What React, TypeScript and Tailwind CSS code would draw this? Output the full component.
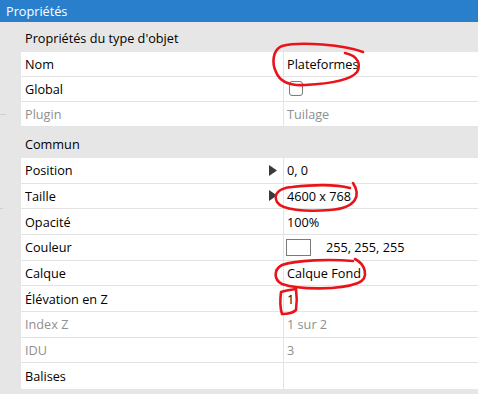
import React from "react";

type Row = {
  label: string;
  value?: React.ReactNode;
  disabled?: boolean;
  arrow?: boolean;
};

const group1: Row[] = [
  { label: "Nom", value: "Plateformes" },
  {
    label: "Global",
    value: <span className="block w-[14px] h-[15px] rounded-[3px] border border-[#7a7a7a] bg-white ml-[2px] -mt-[2px]" />,
  },
  { label: "Plugin", value: "Tuilage", disabled: true },
];

const group2: Row[] = [
  { label: "Position", value: "0, 0", arrow: true },
  { label: "Taille", value: "4600 x 768", arrow: true },
  { label: "Opacité", value: "100%" },
  {
    label: "Couleur",
    value: (
      <span className="flex items-center">
        <span className="block w-[25px] h-[17px] border border-[#7a7a7a] bg-white mr-[15px] -ml-[1px] -mt-[1px]" />
        255, 255, 255
      </span>
    ),
  },
  { label: "Calque", value: "Calque Fond" },
  { label: "Élévation en Z", value: "1" },
  { label: "Index Z", value: "1 sur 2", disabled: true },
  { label: "IDU", value: "3", disabled: true },
  { label: "Balises", value: "" },
];

function PropRow({ row, h, last }: { row: Row; h: string; last?: boolean }) {
  const color = row.disabled ? "text-[#8f8f8f]" : "text-black";
  return (
    <div className={`ml-[21px] bg-white flex box-border ${h} ${last ? "" : "border-b border-[#e3e3e3]"}`}>
      <div className={`w-[262px] shrink-0 pl-[4px] pr-[6px] pt-[1px] flex items-center justify-between ${color}`}>
        <span>{row.label}</span>
        {row.arrow && (
          <svg width="8" height="11" viewBox="0 0 8 11" className="-mt-[1px]">
            <path d="M0 0 L8 5.5 L0 11 Z" fill="#3a3a3a" />
          </svg>
        )}
      </div>
      <div className={`flex-1 border-l border-[#e3e3e3] pl-[3px] pt-[1px] flex items-center ${color}`}>{row.value}</div>
    </div>
  );
}

export default function App() {
  return (
    <div
      className="relative w-[478px] h-[394px] bg-[#e6e6e6] overflow-hidden text-[12.7px] leading-none"
      style={{ fontFamily: "'Open Sans', 'Noto Sans', sans-serif" }}
    >
      <div className="h-[22px] bg-[#2a7fcd] text-white pl-[6px] flex items-center">Propriétés</div>
      <div className="h-[30px] pl-[25px] pt-[2px] flex items-center text-black">Propriétés du type d'objet</div>
      {group1.map((r) => (
        <PropRow key={r.label} row={r} h="h-[25px]" last={false} />
      ))}
      <div className="h-[31px] pl-[25px] pt-[3px] flex items-center text-black">Commun</div>
      {group2.map((r, i) => (
        <PropRow key={r.label} row={r} h="h-[25.67px]" last={i === group2.length - 1} />
      ))}

      <div className="absolute left-0 top-[114px] w-[6px] h-px bg-[#cfcfcf]" />
      <div className="absolute left-0 top-[208px] w-[3px] h-px bg-[#cfcfcf]" />

      <svg
        className="absolute left-0 top-0 pointer-events-none"
        width="478"
        height="394"
        viewBox="0 0 478 394"
        fill="none"
        stroke="#e8141a"
        strokeWidth="2.6"
        strokeLinecap="round"
        strokeLinejoin="round"
      >
        <path d="M363 52 C345 45 300 41 282 46 C272 50 272 64 276 72 C280 82 290 86 305 85 C325 84 350 81 357 72 C361 65 359 56 345 53" />
        <path d="M353 183 C361 195 357 208 330 210 C305 212 282 210 277 202 C273 194 279 188 292 187 C310 185 335 184 350 188" />
        <path d="M355 259 C365 264 370 278 358 283 C340 290 300 290 282 284 C274 280 273 270 282 265 C296 260 330 259 353 261" />
        <path d="M296 289 C289 290 284 291 281 292 C280 300 280 308 282 314 C287 314 293 313 296 310 C297 303 297 296 296 289" />
      </svg>
    </div>
  );
}
